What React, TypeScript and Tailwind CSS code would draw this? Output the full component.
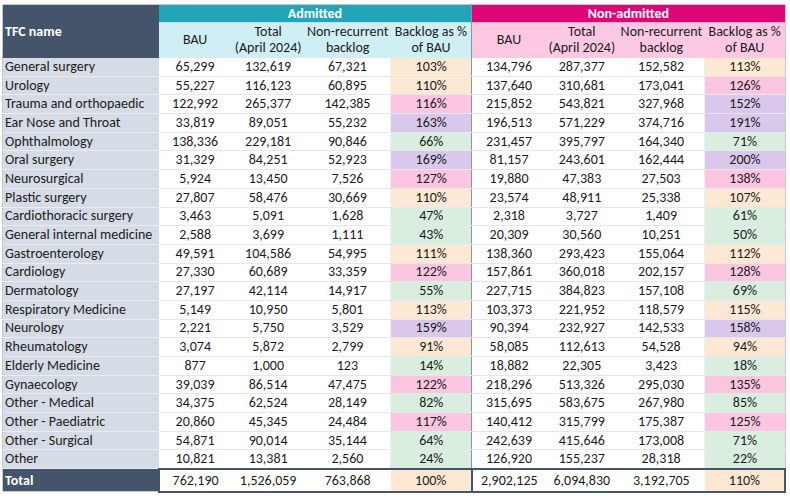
import React from 'react';

type Row = {
  name: string;
  a: [string, string, string];
  ap: string;
  ac: Tone;
  n: [string, string, string];
  np: string;
  nc: Tone;
};

type Tone = 'o' | 'p' | 'v' | 'g';

const tone: Record<Tone, string> = {
  o: 'bg-[#fde9d3]',
  p: 'bg-[#fcc6e0]',
  v: 'bg-[#dac8ec]',
  g: 'bg-[#d9eedf]',
};

const rows: Row[] = [
  { name: 'General surgery', a: ['65,299', '132,619', '67,321'], ap: '103%', ac: 'o', n: ['134,796', '287,377', '152,582'], np: '113%', nc: 'o' },
  { name: 'Urology', a: ['55,227', '116,123', '60,895'], ap: '110%', ac: 'o', n: ['137,640', '310,681', '173,041'], np: '126%', nc: 'p' },
  { name: 'Trauma and orthopaedic', a: ['122,992', '265,377', '142,385'], ap: '116%', ac: 'p', n: ['215,852', '543,821', '327,968'], np: '152%', nc: 'v' },
  { name: 'Ear Nose and Throat', a: ['33,819', '89,051', '55,232'], ap: '163%', ac: 'v', n: ['196,513', '571,229', '374,716'], np: '191%', nc: 'v' },
  { name: 'Ophthalmology', a: ['138,336', '229,181', '90,846'], ap: '66%', ac: 'g', n: ['231,457', '395,797', '164,340'], np: '71%', nc: 'g' },
  { name: 'Oral surgery', a: ['31,329', '84,251', '52,923'], ap: '169%', ac: 'v', n: ['81,157', '243,601', '162,444'], np: '200%', nc: 'v' },
  { name: 'Neurosurgical', a: ['5,924', '13,450', '7,526'], ap: '127%', ac: 'p', n: ['19,880', '47,383', '27,503'], np: '138%', nc: 'p' },
  { name: 'Plastic surgery', a: ['27,807', '58,476', '30,669'], ap: '110%', ac: 'o', n: ['23,574', '48,911', '25,338'], np: '107%', nc: 'o' },
  { name: 'Cardiothoracic surgery', a: ['3,463', '5,091', '1,628'], ap: '47%', ac: 'g', n: ['2,318', '3,727', '1,409'], np: '61%', nc: 'g' },
  { name: 'General internal medicine', a: ['2,588', '3,699', '1,111'], ap: '43%', ac: 'g', n: ['20,309', '30,560', '10,251'], np: '50%', nc: 'g' },
  { name: 'Gastroenterology', a: ['49,591', '104,586', '54,995'], ap: '111%', ac: 'o', n: ['138,360', '293,423', '155,064'], np: '112%', nc: 'o' },
  { name: 'Cardiology', a: ['27,330', '60,689', '33,359'], ap: '122%', ac: 'p', n: ['157,861', '360,018', '202,157'], np: '128%', nc: 'p' },
  { name: 'Dermatology', a: ['27,197', '42,114', '14,917'], ap: '55%', ac: 'g', n: ['227,715', '384,823', '157,108'], np: '69%', nc: 'g' },
  { name: 'Respiratory Medicine', a: ['5,149', '10,950', '5,801'], ap: '113%', ac: 'o', n: ['103,373', '221,952', '118,579'], np: '115%', nc: 'o' },
  { name: 'Neurology', a: ['2,221', '5,750', '3,529'], ap: '159%', ac: 'v', n: ['90,394', '232,927', '142,533'], np: '158%', nc: 'v' },
  { name: 'Rheumatology', a: ['3,074', '5,872', '2,799'], ap: '91%', ac: 'o', n: ['58,085', '112,613', '54,528'], np: '94%', nc: 'o' },
  { name: 'Elderly Medicine', a: ['877', '1,000', '123'], ap: '14%', ac: 'g', n: ['18,882', '22,305', '3,423'], np: '18%', nc: 'g' },
  { name: 'Gynaecology', a: ['39,039', '86,514', '47,475'], ap: '122%', ac: 'p', n: ['218,296', '513,326', '295,030'], np: '135%', nc: 'p' },
  { name: 'Other - Medical', a: ['34,375', '62,524', '28,149'], ap: '82%', ac: 'g', n: ['315,695', '583,675', '267,980'], np: '85%', nc: 'g' },
  { name: 'Other - Paediatric', a: ['20,860', '45,345', '24,484'], ap: '117%', ac: 'p', n: ['140,412', '315,799', '175,387'], np: '125%', nc: 'p' },
  { name: 'Other - Surgical', a: ['54,871', '90,014', '35,144'], ap: '64%', ac: 'g', n: ['242,639', '415,646', '173,008'], np: '71%', nc: 'g' },
  { name: 'Other', a: ['10,821', '13,381', '2,560'], ap: '24%', ac: 'g', n: ['126,920', '155,237', '28,318'], np: '22%', nc: 'g' },
];

const cell = 'h-[18.7px] p-0 text-center leading-none border-b border-[#e3e7ee]';
const heads = ['BAU', 'Total\n(April 2024)', 'Non-recurrent\nbacklog', 'Backlog as %\nof BAU'];

export default function App() {
  return (
    <div className="h-[499px] w-[790px] bg-white pl-[2px] pt-[4px] font-['Carlito','Lato',sans-serif] text-[14px] text-[#1b1b1b]">
      <table className="w-[784px] table-fixed border-collapse border border-[#c3c8d0]">
        <colgroup>
          <col className="w-[156px]" />
          <col className="w-[73px]" />
          <col className="w-[73px]" />
          <col className="w-[86px]" />
          <col className="w-[81px]" />
          <col className="w-[74px]" />
          <col className="w-[72px]" />
          <col className="w-[87px]" />
          <col className="w-[80px]" />
        </colgroup>
        <thead>
          <tr className="h-[18px]">
            <th rowSpan={2} className="bg-[#44546a] pl-[2px] text-left align-middle font-bold text-white">
              TFC name
            </th>
            <th colSpan={4} className="bg-[#22a5b8] p-0 text-center font-bold leading-none text-white">
              Admitted
            </th>
            <th colSpan={4} className="border-l border-[#8596ad] bg-[#de0577] p-0 text-center font-bold leading-none text-white">
              Non-admitted
            </th>
          </tr>
          <tr className="h-[35px] leading-[16px]">
            {heads.map((t) => (
              <th key={'a' + t} className="whitespace-pre-line border-t border-[#b9e4ea] bg-[#d0eff4] p-0 text-center font-normal">
                {t}
              </th>
            ))}
            {heads.map((t, i) => (
              <th
                key={'n' + t}
                className={`whitespace-pre-line border-t border-[#f5a9cf] bg-[#fdc8e2] p-0 text-center font-normal ${i === 0 ? 'border-l border-l-[#8596ad]' : ''}`}
              >
                {t}
              </th>
            ))}
          </tr>
        </thead>
        <tbody>
          {rows.map((r) => (
            <tr key={r.name}>
              <td className="h-[18.7px] whitespace-nowrap border-b border-[#e9edf2] bg-[#d6dce5] p-0 pl-[2px] leading-none">{r.name}</td>
              {r.a.map((v, i) => (
                <td key={'a' + i} className={cell}>{v}</td>
              ))}
              <td className={`${cell} border-l border-l-[#eef0f3] ${tone[r.ac]}`}>{r.ap}</td>
              {r.n.map((v, i) => (
                <td key={'n' + i} className={`${cell} ${i === 0 ? 'border-l border-l-[#8596ad]' : ''}`}>{v}</td>
              ))}
              <td className={`${cell} border-l border-l-[#eef0f3] ${tone[r.nc]}`}>{r.np}</td>
            </tr>
          ))}
          <tr className="h-[22px]">
            <td className="bg-[#44546a] p-0 pl-[2px] font-bold text-white">Total</td>
            <td className="border-y-2 border-l-2 border-[#44546a] p-0 text-center">762,190</td>
            <td className="border-y-2 border-[#44546a] p-0 text-center">1,526,059</td>
            <td className="border-y-2 border-[#44546a] p-0 text-center">763,868</td>
            <td className="border-y-2 border-[#44546a] bg-[#fde9d3] p-0 text-center">100%</td>
            <td className="border-y-2 border-l-2 border-[#44546a] p-0 text-center">2,902,125</td>
            <td className="border-y-2 border-[#44546a] p-0 text-center">6,094,830</td>
            <td className="border-y-2 border-[#44546a] p-0 text-center">3,192,705</td>
            <td className="border-y-2 border-r-2 border-[#44546a] bg-[#fde9d3] p-0 text-center">110%</td>
          </tr>
        </tbody>
      </table>
    </div>
  );
}
